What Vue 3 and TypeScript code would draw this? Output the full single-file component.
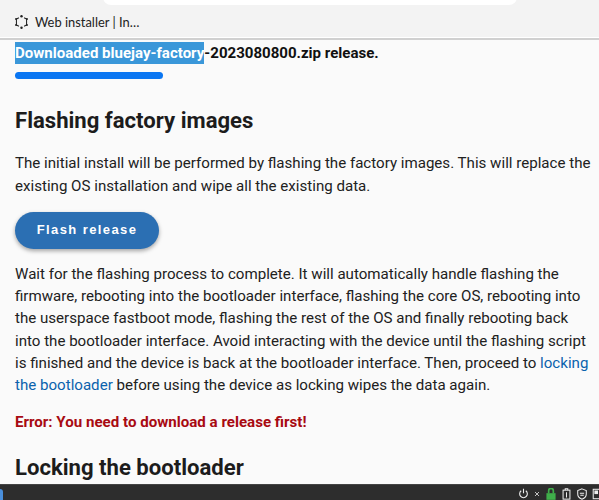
<script setup lang="ts">
const paragraph = 'Wait for the flashing process to complete. It will automatically handle flashing the firmware, rebooting into the bootloader interface, flashing the core OS, rebooting into the userspace fastboot mode, flashing the rest of the OS and finally rebooting back into the bootloader interface. Avoid interacting with the device until the flashing script is finished and the device is back at the bootloader interface. Then, proceed to '
</script>

<template>
  <div class="screen">
    <header class="tabbar">
      <div class="urlbar"></div>
      <div class="tab">
        <svg class="tab-icon" viewBox="0 0 16 16" width="15" height="16" fill="none" stroke="#222" stroke-width="1.1">
          <path d="M5.2 3.4L2.6 4.9v6.2l2.6 1.5M10.8 3.4l2.6 1.5v6.2l-2.6 1.5" />
          <circle cx="8" cy="1.9" r="1.3" fill="#222" stroke="none" />
          <circle cx="8" cy="14.1" r="1.3" fill="#222" stroke="none" />
          <circle cx="2.2" cy="4.8" r="1.1" fill="#222" stroke="none" />
          <circle cx="13.8" cy="4.8" r="1.1" fill="#222" stroke="none" />
          <circle cx="2.2" cy="11.2" r="1.1" fill="#222" stroke="none" />
          <circle cx="13.8" cy="11.2" r="1.1" fill="#222" stroke="none" />
        </svg>
        <span>Web installer | In…</span>
      </div>
    </header>
    <main class="page">
      <p class="status"><span class="selected">Downloaded bluejay-factory</span>-2023080800.zip release.</p>
      <div class="progress"></div>
      <h2 class="first">Flashing factory images</h2>
      <p class="text intro">The initial install will be performed by flashing the factory images. This will replace the existing OS installation and wipe all the existing data.</p>
      <button class="flash">Flash release</button>
      <p class="text body">{{ paragraph }}<a>locking the bootloader</a> before using the device as locking wipes the data again.</p>
      <p class="error">Error: You need to download a release first!</p>
      <h2 class="second">Locking the bootloader</h2>
    </main>
    <footer class="taskbar">
      <div class="start"></div>
      <div class="tray">
        <svg viewBox="0 0 12 12" width="11" height="11" fill="none" stroke="#eee" stroke-width="1.2"><path d="M3.5 3a4.2 4.2 0 1 0 5 0M6 0.8v5" /></svg>
        <svg viewBox="0 0 12 12" width="8" height="8" fill="none" stroke="#ccc" stroke-width="1.4"><path d="M3 3l6 6M9 3l-6 6" /></svg>
        <svg class="lock" viewBox="0 0 12 14" width="10" height="12"><path d="M3.2 6V3a2.8 2.8 0 0 1 5.6 0v3" fill="none" stroke="#3fae4a" stroke-width="2" /><rect x="0.5" y="6" width="11" height="8" fill="#3fae4a" /></svg>
        <svg viewBox="0 0 12 14" width="11" height="12" fill="none" stroke="#eee" stroke-width="1.2"><rect x="2" y="2.5" width="8" height="10.5" /><path d="M4.5 2.5V1h3v1.5M6 5v6" /></svg>
        <svg viewBox="0 0 14 14" width="12" height="12" fill="none" stroke="#eee" stroke-width="1.2"><path d="M7 1l5 2v4c0 3-2 5-5 6-3-1-5-3-5-6V3z" /><path d="M4.5 6h5M5 8.5h4" /></svg>
        <svg viewBox="0 0 12 14" width="11" height="12" fill="none" stroke="#eee" stroke-width="1.2"><rect x="1" y="1.5" width="10" height="11" /><rect x="3" y="3.5" width="3" height="3" fill="#eee" /></svg>
      </div>
    </footer>
  </div>
</template>

<style>
html, body { margin: 0; padding: 0; }
</style>

<style scoped>
.screen {
  width: 599px;
  height: 500px;
  overflow: hidden;
  display: flex;
  flex-direction: column;
  background: #fafafa;
  font-family: Roboto, "Liberation Sans", sans-serif;
  color: #212121;
}
.tabbar {
  position: relative;
  flex: none;
  height: 37px;
  background: #f3f3f3;
  border-bottom: 1px solid #fff;
  box-shadow: 0 2px 0 #d0d0d0;
  margin-bottom: 2px;
}
.urlbar {
  position: absolute;
  left: 103px;
  right: 82px;
  top: -10px;
  height: 15px;
  background: #fff;
  border-radius: 0 0 8px 8px;
}
.tab {
  display: flex;
  align-items: center;
  gap: 6px;
  height: 100%;
  padding: 6px 0 0 14px;
  box-sizing: border-box;
  font: 12.9px Lato, sans-serif;
  color: #222;
}
.page {
  flex: 1;
  min-height: 0;
  padding: 2px 0 0 15px;
  overflow: hidden;
}
.status {
  margin: 0;
  font-size: 15.05px;
  line-height: 22px;
  font-weight: 700;
  color: #111;
}
.selected {
  display: inline-block;
  background: #3a97d9;
  color: #fff;
}
.progress {
  width: 148px;
  height: 7px;
  margin-top: 8px;
  border-radius: 3.5px;
  background: #0a76f2;
}
h2 {
  margin: 0;
  font-size: 22.1px;
  line-height: 30px;
  font-weight: 700;
  color: #1c1c1c;
}
.first { margin-top: 26px; }
.text {
  margin: 0;
  font-size: 15.1px;
  color: #212121;
  width: 580px;
}
.intro { margin-top: 17px; line-height: 23px; }
.flash {
  display: block;
  width: 144px;
  height: 37px;
  margin-top: 14px;
  padding: 0 0 2px;
  border: none;
  border-radius: 19px;
  background: #2b6fb3;
  color: #fff;
  font: 700 13px "Liberation Sans", sans-serif;
  letter-spacing: 1.4px;
  box-shadow: 0 2px 4px rgba(0, 0, 0, 0.35);
}
.body { margin-top: 14px; line-height: 22.2px; }
a { color: #0b62ad; }
.error {
  margin: 15px 0 0;
  font-size: 15.1px;
  line-height: 22px;
  font-weight: 700;
  color: #a80a12;
}
.second { margin-top: 19px; }
.taskbar {
  flex: none;
  height: 15px;
  background: #2d2d2d;
  border-top: 1px solid #444;
  display: flex;
  align-items: center;
  justify-content: space-between;
}
.start {
  width: 3px;
  height: 11px;
  margin-top: 4px;
  background: #4a8fdc;
  border-radius: 0 3px 0 0;
}
.tray {
  display: flex;
  align-items: center;
  gap: 4px;
  margin-right: -4px;
  margin-top: 2px;
}
.lock {
  margin: 0 1px;
}
</style>
